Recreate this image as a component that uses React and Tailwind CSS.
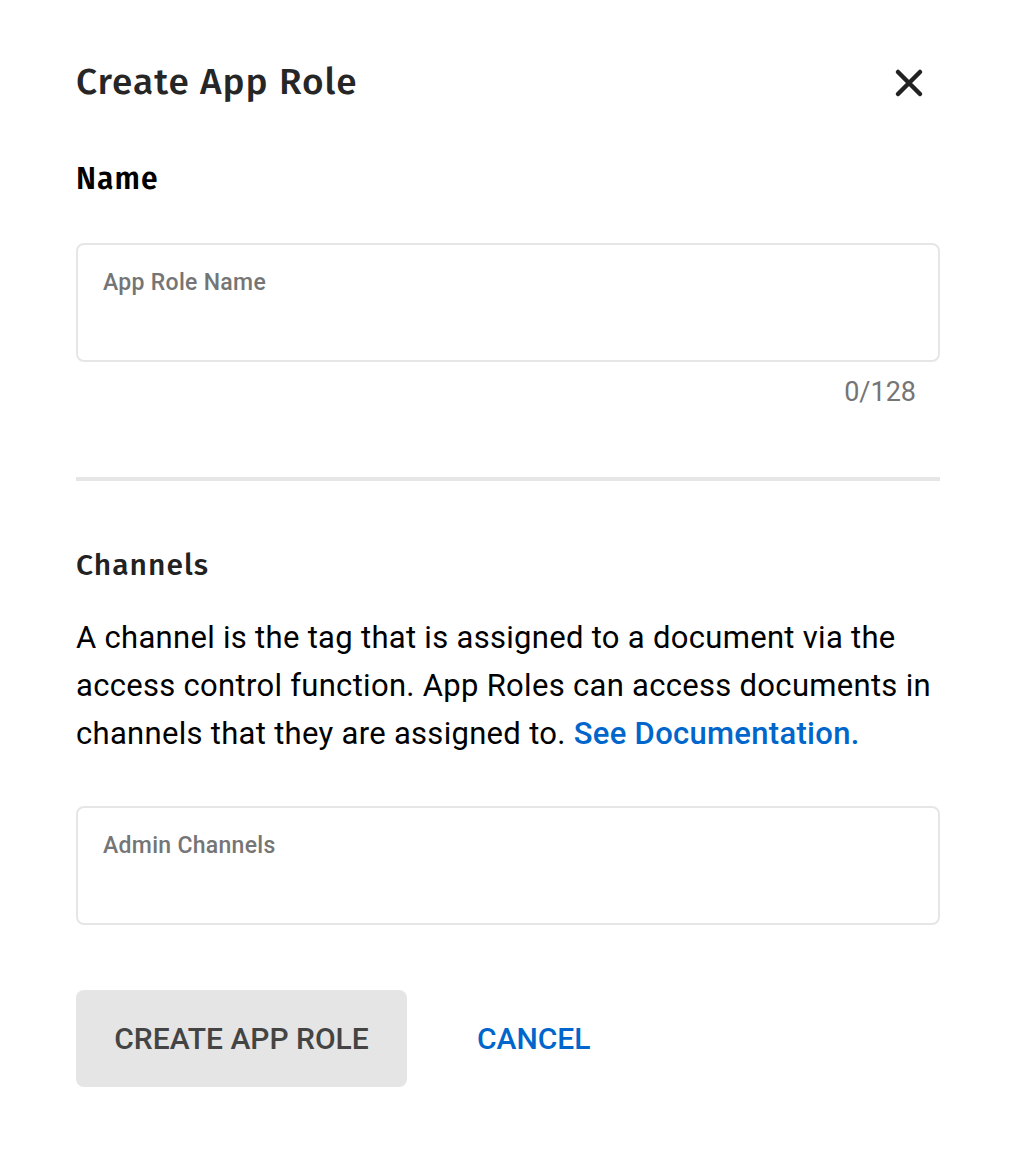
export default function App() {
  const heading = { fontFamily: '"Fira Sans", "Noto Sans", sans-serif' };
  const body = { fontFamily: 'Roboto, "Liberation Sans", sans-serif' };

  return (
    <div className="min-h-screen bg-white pl-[76px] pr-[72px] pt-[58px]" style={body}>
      <div className="flex items-start justify-between">
        <h1 className="text-[37px] leading-[48px] font-medium tracking-[1px] text-[#262626]" style={heading}>
          Create App Role
        </h1>
        <button className="mt-[10px] mr-[16px] text-[#222]" aria-label="Close">
          <svg width="30" height="30" viewBox="0 0 30 30" fill="none" stroke="currentColor" strokeWidth="4.5" strokeLinecap="round">
            <path d="M4 4L26 26M26 4L4 26" />
          </svg>
        </button>
      </div>

      <h2 className="mt-[53px] text-[30px] leading-[40px] font-semibold tracking-[1px] text-black" style={heading}>
        Name
      </h2>

      <div className="mt-[44px] h-[119px] rounded-[8px] border-2 border-[#e6e6e6] px-[25px] pt-[24px]">
        <span className="text-[23px] leading-[28px] font-medium tracking-[0.3px] text-[#757575]">App Role Name</span>
      </div>
      <div className="mt-[14px] pr-[24px] text-right text-[27px] leading-[32px] text-[#757575]">0/128</div>

      <div className="mt-[69px] h-[4px] bg-[#e6e6e6]" />

      <h2 className="mt-[64px] text-[30px] leading-[40px] font-medium tracking-[1px] text-[#222]" style={heading}>
        Channels
      </h2>

      <p className="mt-[29px] text-[31px] leading-[48px] tracking-[0.3px] text-black">
        A channel is the tag that is assigned to a document via the access control function. App Roles can access
        documents in channels that they are assigned to.{' '}
        <a href="#" className="font-medium text-[#0066cc]">See Documentation.</a>
      </p>

      <div className="mt-[48px] h-[119px] rounded-[8px] border-2 border-[#e6e6e6] px-[25px] pt-[24px]">
        <span className="text-[23px] leading-[28px] font-medium tracking-[0.3px] text-[#757575]">Admin Channels</span>
      </div>

      <div className="mt-[65px] flex items-center gap-[70px]">
        <button className="h-[97px] w-[331px] rounded-[8px] bg-[#e5e5e5] text-[30px] font-medium text-[#444]">
          CREATE APP ROLE
        </button>
        <button className="text-[30px] font-medium text-[#0066cc]">CANCEL</button>
      </div>
    </div>
  );
}
